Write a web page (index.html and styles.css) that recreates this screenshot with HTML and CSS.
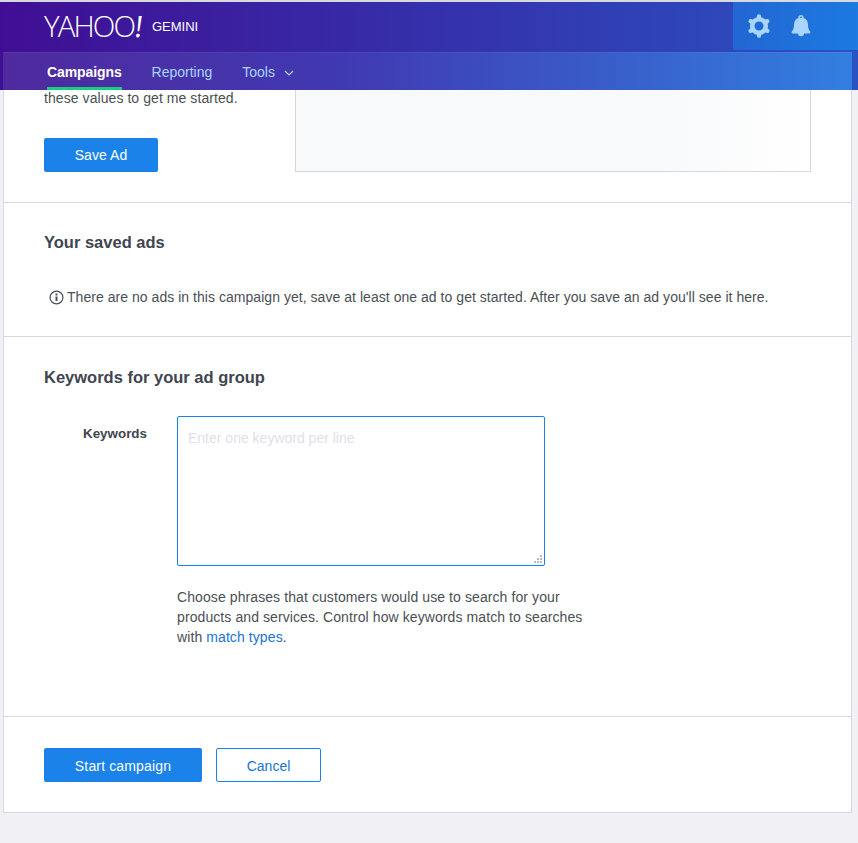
FILE: index.html
```html
<!DOCTYPE html>
<html lang="en">
<head>
    <meta charset="UTF-8">
    <meta name="viewport" content="width=device-width, initial-scale=1.0">
    <title>Yahoo Gemini | New campaign</title>
    <link rel="stylesheet" href="styles.css">
</head>
<body>
    <header class="topbar">
        <div class="topbar-main">
            <div class="brand">
                <span class="logo">YAHOO<span class="logo-mark">!</span></span>
                <span class="product">GEMINI</span>
            </div>
            <div class="topbar-icons">
                <svg class="icon" width="26" height="26" viewBox="0 0 26 26" aria-hidden="true">
                    <g stroke="#a9d5ff" stroke-linecap="round" fill="none">
                        <circle cx="13" cy="13" r="6.8" stroke-width="4.6"/>
                        <path stroke-width="4.4" d="M13 4v-.6M13 22v.6M5.2 8.5l-.5-.3M20.8 17.5l.5.3M5.2 17.5l-.5.3M20.8 8.5l.5-.3"/>
                    </g>
                </svg>
                <svg class="icon" width="24" height="26" viewBox="0 0 24 26" aria-hidden="true">
                    <path fill="#a9d5ff" d="M12 2a2.600 2.600 0 0 1 2.600 2.600v.5c3 1 4.400 3.600 4.400 6.900 0 3.200.8 5 2 6.300.8.800.4 2.200-.8 2.200H15a3 2.800 0 0 1-6 0H3.800c-1.200 0-1.600-1.400-.8-2.200C4.200 17 5 15.200 5 12c0-3.300 1.400-5.900 4.400-6.900v-.5A2.600 2.600 0 0 1 12 2zm0 1.500a1.100 1.100 0 0 0-1.100 1.100v.2a8 8 0 0 1 2.200 0v-.2A1.100 1.100 0 0 0 12 3.500z"/>
                </svg>
            </div>
        </div>
        <nav class="topbar-nav">
            <a class="active" href="#">Campaigns</a>
            <a href="#">Reporting</a>
            <a href="#">Tools
                <svg width="10" height="6" viewBox="0 0 10 6" aria-hidden="true">
                    <path d="M1 1l4 4 4-4" fill="none" stroke="#a9d5ff" stroke-width="1.200"/>
                </svg>
            </a>
        </nav>
    </header>

    <main class="card">
        <section class="panel panel-ad">
            <div class="ad-side">
                <p class="ad-text">these values to get me started.</p>
                <button class="btn btn-primary btn-save">Save Ad</button>
            </div>
            <div class="ad-preview"></div>
        </section>

        <section class="panel panel-saved">
            <h2>Your saved ads</h2>
            <p class="notice">
                <svg width="15" height="15" viewBox="0 0 15 15" aria-hidden="true">
                    <circle cx="7.500" cy="7.500" r="6.400" fill="none" stroke="#4a4f55" stroke-width="1.200"/>
                    <path d="M7.500 6.500v4.500" stroke="#4a4f55" stroke-width="2"/>
                    <path d="M7.500 3.500v2" stroke="#4a4f55" stroke-width="2"/>
                </svg>
                There are no ads in this campaign yet, save at least one ad to get started. After you save an ad you'll see it here.
            </p>
        </section>

        <section class="panel panel-keywords">
            <h2>Keywords for your ad group</h2>
            <div class="field">
                <label for="keywords">Keywords</label>
                <div class="field-body">
                    <div class="textarea-wrap">
                        <textarea id="keywords" placeholder="Enter one keyword per line"></textarea>
                        <svg class="grip" width="8" height="8" viewBox="0 0 8 8" aria-hidden="true">
                            <path fill="#bbb" d="M6 0h2v2H6zM3 3h2v2H3zM6 3h2v2H6zM0 6h2v2H0zM3 6h2v2H3zM6 6h2v2H6z"/>
                        </svg>
                    </div>
                    <p class="help">Choose phrases that customers would use to search for your products and services. Control how keywords match to searches with <a href="#">match types</a>.</p>
                </div>
            </div>
        </section>

        <section class="panel panel-actions">
            <button class="btn btn-primary btn-start">Start campaign</button>
            <button class="btn btn-outline">Cancel</button>
        </section>
    </main>
</body>
</html>
```

FILE: styles.css
```css
/* Basic page */
html, body {
    height: 100%;
}

body {
    font-family: "Liberation Sans", Arial, sans-serif;
    font-size: 14px;
    line-height: 20px;
    color: #4a4f55;
    margin: 0;
    background-color: #f0f0f5;
    overflow: hidden;
}

p {
    margin: 0;
}

h2 {
    margin: 0;
    font-size: 16.500px;
    line-height: 24px;
    font-weight: bold;
    color: #404550;
}

a {
    color: #1a73d9;
    text-decoration: none;
}

/* Top bar */
.topbar {
    position: fixed;
    top: 0;
    left: 0;
    right: 0;
    height: 90px;
    box-sizing: border-box;
    border-top: 2px solid #d8d8e0;
    background: linear-gradient(90deg, #400e93 0%, #2a52c2 100%);
}

.topbar-main {
    display: flex;
    justify-content: space-between;
    height: 48px;
    padding-left: 44px;
}

.brand {
    display: flex;
    align-items: center;
    gap: 11px;
    color: #fff;
}

.logo {
    font-family: "Open Sans", sans-serif;
    font-weight: 300;
    font-size: 29.500px;
    line-height: 48px;
    letter-spacing: -1.900px;
}

.logo-mark {
    display: inline-block;
    font-weight: 400;
    margin-left: 1px;
    transform: skewX(-7deg);
}

.product {
    font-size: 13px;
    margin-top: 2px;
}

.topbar-icons {
    display: flex;
    align-items: center;
    gap: 17px;
    width: 125px;
    padding-left: 13px;
    box-sizing: border-box;
    background: linear-gradient(90deg, #2266d4 0%, #1c7ae0 100%);
}

.topbar-nav {
    display: flex;
    gap: 30px;
    height: 38px;
    margin: 2px 6px 0 3px;
    padding-left: 44px;
    background: linear-gradient(90deg, #4f2a9e 0%, #4039b2 40%, #327fdf 100%);
    border-top: 1px solid rgba(255, 255, 255, 0.05);
    box-sizing: border-box;
}

.topbar-nav a {
    color: #a9d5ff;
    line-height: 39px;
    height: 37px;
    box-sizing: border-box;
}

.topbar-nav a.active {
    color: #fff;
    font-weight: bold;
    letter-spacing: -0.100px;
    border-bottom: 3px solid #15d07e;
}

.topbar-nav svg {
    margin-left: 5px;
    vertical-align: 1px;
}

/* Card */
.card {
    margin: 50px 6px 0 3px;
    height: 763px;
    box-sizing: border-box;
    background-color: #fff;
    border: 1px solid #d8d8e0;
    display: flex;
    flex-direction: column;
}

.panel {
    border-bottom: 1px solid #d8d8e0;
    box-sizing: border-box;
    padding: 0 40px;
}

.panel-ad {
    display: flex;
    justify-content: space-between;
    height: 152px;
    padding-right: 40px;
    padding-top: 37px;
}

.ad-side {
    display: flex;
    flex-direction: column;
    align-items: flex-start;
    gap: 30px;
}

.ad-text {
    letter-spacing: 0.070px;
}

.ad-preview {
    width: 516px;
    height: 83px;
    margin-top: 0;
    border: 1px solid #d8d8d8;
    box-sizing: border-box;
    align-self: flex-end;
    margin-bottom: 30px;
    background: linear-gradient(90deg, #f8f9fb 70%, #fff 100%);
}

.panel-saved {
    height: 134px;
    padding-top: 27px;
}

.notice {
    display: flex;
    align-items: center;
    gap: 3px;
    margin-top: 33px;
    padding-left: 5px;
    letter-spacing: 0.040px;
}

.panel-keywords {
    height: 380px;
    padding-top: 28px;
}

.field {
    display: flex;
    margin-top: 27px;
}

.field label {
    width: 103px;
    text-align: right;
    font-weight: bold;
    font-size: 13.400px;
    margin-top: 8px;
    color: #404550;
}

.field-body {
    margin-left: 30px;
    width: 410px;
}

.textarea-wrap {
    position: relative;
    width: 368px;
}

textarea {
    display: block;
    width: 368px;
    height: 150px;
    box-sizing: border-box;
    padding: 11px 10px;
    border: 1px solid #1a82e8;
    border-radius: 2px;
    outline: none;
    resize: none;
    font-family: inherit;
    font-size: 14px;
    line-height: 20px;
}

textarea::placeholder {
    color: #dfe0e8;
    opacity: 1;
}

.grip {
    position: absolute;
    right: 3px;
    bottom: 3px;
}

.help {
    margin-top: 21px;
    letter-spacing: 0.090px;
}

.panel-actions {
    display: flex;
    gap: 14px;
    border-bottom: none;
    padding-top: 31px;
}

/* Buttons */
.btn {
    height: 34px;
    box-sizing: border-box;
    border-radius: 2px;
    font-family: inherit;
    font-size: 14px;
    cursor: pointer;
    padding: 0;
}

.btn-primary {
    background-color: #1a82e8;
    color: #fff;
    border: none;
}

.btn-outline {
    width: 105px;
    background-color: #fff;
    color: #1a73d9;
    border: 1px solid #1a82e8;
    padding-top: 2px;
}

.btn-save {
    width: 114px;
    letter-spacing: 0.050px;
}

.btn-start {
    width: 158px;
    padding-top: 2px;
    letter-spacing: 0.150px;
}
```
